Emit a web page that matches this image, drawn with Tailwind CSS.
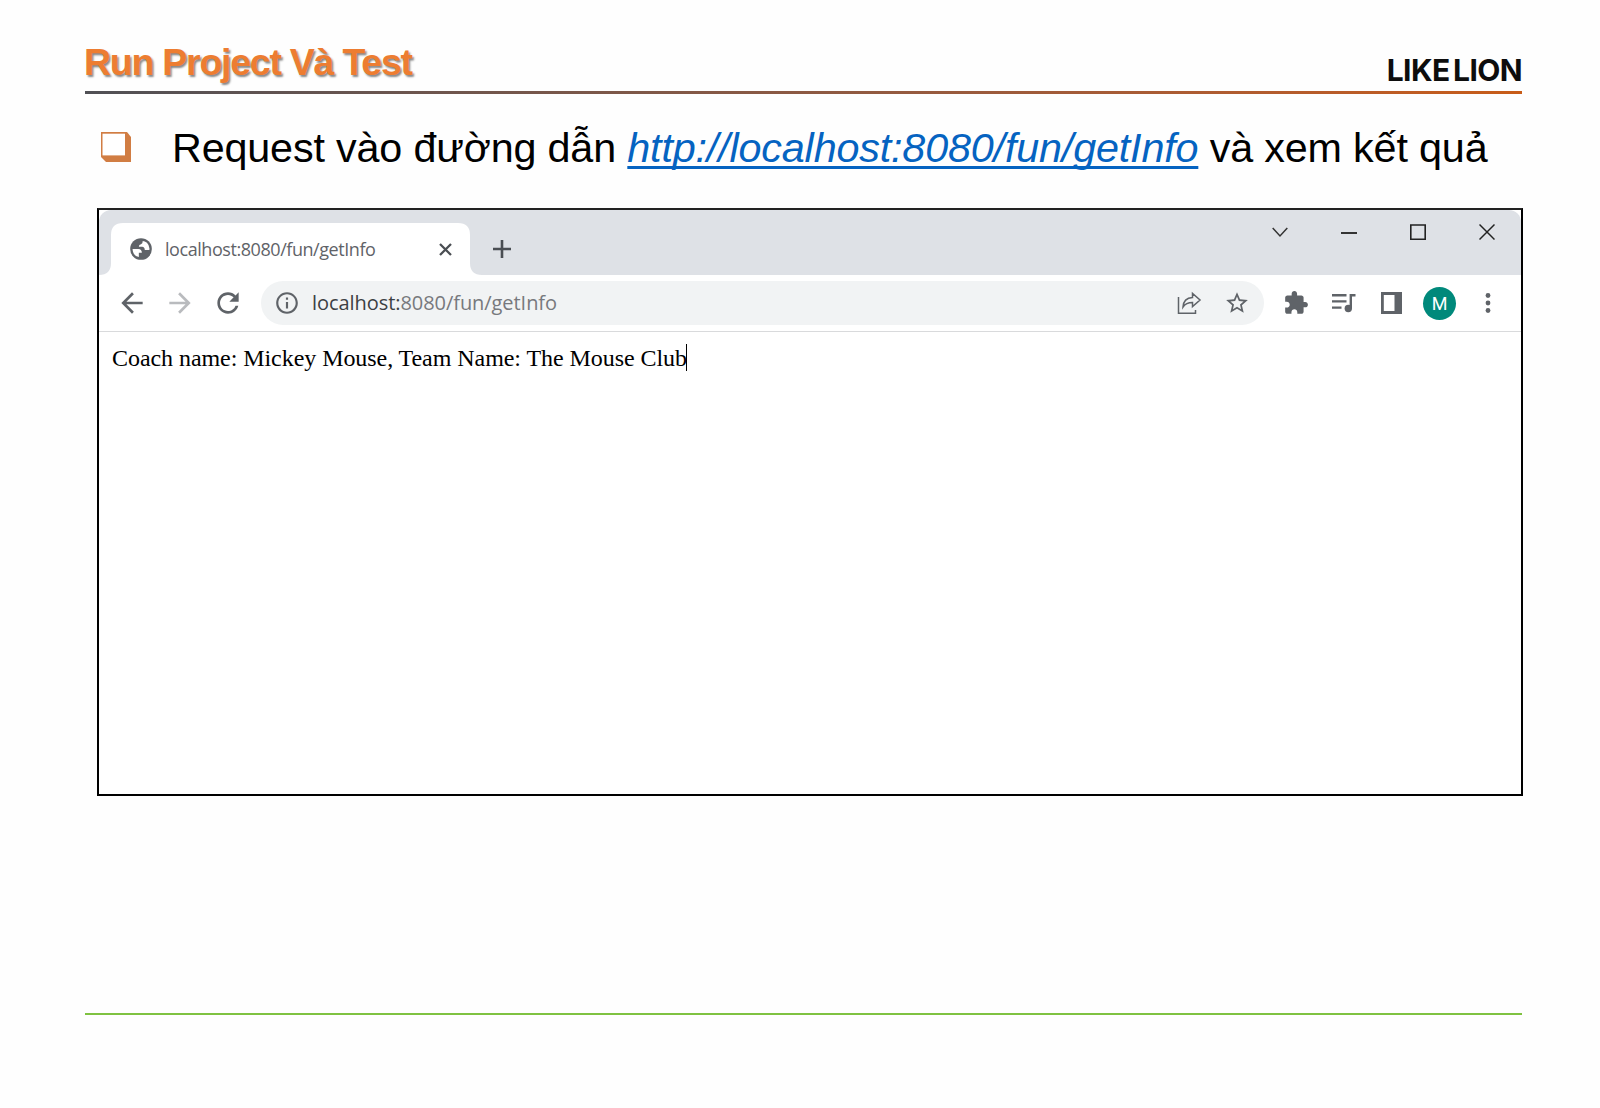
<!DOCTYPE html>
<html lang="vi"><head><meta charset="utf-8"><title>Run Project Và Test</title>
<script src="https://cdn.jsdelivr.net/npm/@tailwindcss/browser@4"></script></head>
<body class="bg-white">
<main class="flex h-[1108px] w-[1600px] flex-col overflow-hidden bg-[#fefefe] pl-[85px] pr-[78px] font-['Liberation_Sans',Arial,sans-serif]">
<header class="flex h-[91px] shrink-0 items-start justify-between whitespace-nowrap">
<h1 class="-ml-px mt-[41px] text-[37.5px] leading-[43px] font-bold tracking-[-1.25px] text-[#ed7d31] [text-shadow:1.5px_1.5px_2px_#00000077]">Run Project Và Test</h1>
<div class="mt-[54px] text-[30px] leading-[32px] font-bold tracking-[-0.6px] text-[#0d0d0d] font-['Inter',sans-serif] [word-spacing:-3px]">LIKE LION</div>
</header>
<div class="h-[3px] shrink-0 bg-linear-to-r from-[#505055] to-[#c85c17]"></div>
<section class="flex h-[114px] shrink-0 items-start pl-[16px] whitespace-nowrap text-black">
<svg class="mt-[38px] h-[30px] w-[30px]" viewBox="0 0 30 30"><path d="M0 0H26L30 5V30H5L0 25Z" fill="#d17d43"/><path d="M1.500 1.700H24V23.400H1.500Z" fill="#fff"/></svg>
<p class="mt-[31px] ml-[41px] text-[41.3px] leading-[47px] tracking-[-0.16px]">Request vào đường dẫn <a class="text-[#0563c1] italic underline decoration-[2.5px] underline-offset-[4px] [text-decoration-skip-ink:none]">http://localhost:8080/fun/getInfo</a> và xem kết quả</p>
</section>
<section class="ml-[12px] flex h-[588px] w-[1426px] shrink-0 flex-col overflow-hidden border-2 border-t-[#222] border-black bg-white">
<div class="flex h-[65px] shrink-0 items-start rounded-t-[12px] bg-[#dee1e6]">
<svg class="mt-[13px] h-[52px] w-[384px] shrink-0 -mr-[384px]" viewBox="0 0 384 52"><path d="M0 52Q12 52 12 40V12Q12 0 24 0H359Q371 0 371 12V40Q371 52 383 52Z" fill="#fff"/></svg>
<div class="relative mt-[13px] flex h-[52px] w-[371px] items-center pl-[29px] text-[#5f6368]">
<svg class="h-[26px] w-[26px] shrink-0" viewBox="0 0 24 24"><circle cx="12" cy="12" r="10" fill="#5f6368"/><path d="M4.200 12H9.500Q12.800 12.300 12.800 15.500H10V19.300Q4.500 18.500 4.200 12ZM13.500 4.500Q13.800 7 12 7.500Q10 7.800 10 10H13Q15.500 10.300 15.500 13H19.700Q20.300 9 17.500 6.200Q15.500 4.600 13.500 4.500Z" fill="#fff"/></svg>
<div class="ml-[11px] w-[274px] text-[18px] tracking-[-0.44px] whitespace-nowrap font-['Open_Sans',sans-serif]">localhost:8080/fun/getInfo</div>
<svg class="h-[13px] w-[13px] shrink-0" viewBox="0 0 13 13" stroke="#4a4e53" stroke-width="2.300"><path d="M1 1L12 12M12 1L1 12"/></svg></div>
<svg class="mt-[30px] ml-[23px] h-[18px] w-[18px]" viewBox="0 0 18 18" stroke="#4a4e53" stroke-width="2.600"><path d="M0 9H18M9 0V18"/></svg>
<div class="mt-[13px] ml-auto mr-[26px] flex items-center gap-[53px]">
<svg class="h-[18px] w-[16px]" viewBox="0 0 16 18" fill="none" stroke="#333" stroke-width="1.500"><path d="M.7 5L8 13L15.300 5"/></svg>
<svg class="h-[18px] w-[16px]" viewBox="0 0 16 18"><path d="M0 9H16V11H0Z" fill="#333"/></svg>
<svg class="h-[18px] w-[16px]" viewBox="0 0 16 18" fill="none" stroke="#222" stroke-width="1.600"><path d="M.8 2H15.200V16.200H.8Z"/></svg>
<svg class="h-[18px] w-[16px]" viewBox="0 0 16 18" fill="none" stroke="#222" stroke-width="1.500"><path d="M.5 1.500L15.500 16.500M15.500 1.500L.5 16.500"/></svg>
</div>
</div>
<div class="flex h-[57px] shrink-0 items-center border-b border-[#d9dadc] pl-[17px] text-[#5f6368]">
<svg class="h-8 w-8" viewBox="0 0 24 24" fill="currentColor"><path d="M20 11H7.830l5.590-5.590L12 4l-8 8 8 8 1.410-1.410L7.830 13H20v-2z"/></svg>
<svg class="ml-4 h-8 w-8" viewBox="0 0 24 24" fill="#b9bbbe"><path d="M12 4l-1.410 1.410L16.170 11H4v2h12.170l-5.580 5.590L12 20l8-8z"/></svg>
<svg class="ml-4 h-8 w-8" viewBox="0 0 24 24" fill="currentColor"><path d="M17.650 6.350C16.200 4.900 14.210 4 12 4c-4.420 0-7.990 3.580-7.990 8s3.570 8 7.990 8c3.730 0 6.840-2.550 7.730-6h-2.080c-.82 2.330-3.040 4-5.650 4-3.310 0-6-2.690-6-6s2.690-6 6-6c1.660 0 3.140.69 4.220 1.780L13 11h7V4l-2.350 2.350z"/></svg>
<div class="ml-[17px] flex h-[44px] w-[1003px] items-center rounded-full bg-[#f1f3f4] pl-[13px]">
<svg class="h-[26px] w-[26px]" viewBox="0 0 24 24" fill="currentColor"><path d="M11 7h2v2h-2zm0 4h2v6h-2zm1-9C6.480 2 2 6.480 2 12s4.480 10 10 10 10-4.480 10-10S17.520 2 12 2zm0 18c-4.410 0-8-3.590-8-8s3.590-8 8-8 8 3.590 8 8-3.590 8-8 8z"/></svg>
<div class="ml-[12px] text-[20px] tracking-[-0.06px] whitespace-nowrap text-[#77797d] font-['Open_Sans',sans-serif]"><span class="text-[#3c4043]">localhost:</span>8080/fun/getInfo</div>
<svg class="ml-auto h-[24px] w-[25px]" viewBox="0 0 25 24" fill="none" stroke="currentColor" stroke-width="1.500"><path d="M1.500 6V22.200H18.500V19M6 16Q6.500 7 15.500 6.500V2.500L23 9L15.500 15.500V11.500Q9 11.500 6 16Z"/></svg>
<svg class="mr-[14px] ml-[22px] h-[26px] w-[26px]" viewBox="0 0 24 24" fill="currentColor"><path d="M22 9.240l-7.190-.62L12 2 9.190 8.630 2 9.240l5.460 4.730L5.820 21 12 17.270 18.180 21l-1.630-7.030L22 9.240zM12 15.400l-3.760 2.270 1-4.280-3.320-2.880 4.380-.38L12 6.100l1.710 4.040 4.380.38-3.320 2.880 1 4.280L12 15.400z"/></svg>
</div>
<svg class="ml-[19px] h-[26px] w-[26px]" viewBox="0 0 24 24" fill="currentColor"><path d="M20.500 11H19V7c0-1.100-.9-2-2-2h-4V3.500C13 2.120 11.880 1 10.500 1S8 2.120 8 3.500V5H4c-1.100 0-1.990.9-1.990 2v3.800H3.500c1.490 0 2.700 1.210 2.700 2.700s-1.210 2.700-2.700 2.700H2V20c0 1.100.9 2 2 2h3.800v-1.500c0-1.490 1.210-2.700 2.700-2.700 1.490 0 2.700 1.210 2.700 2.700V22H17c1.100 0 2-.9 2-2v-4h1.500c1.380 0 2.500-1.120 2.500-2.500S21.880 11 20.500 11z"/></svg>
<svg class="ml-[22px] h-[20px] w-[25px]" viewBox="0 0 25 20" fill="none" stroke="currentColor" stroke-width="2.400"><path d="M1 2.200H15.500M1 8.400H15.500M1 14.600H10.500M24.500 2.200H19.800V15"/><circle cx="17.300" cy="15.500" r="3.700" fill="currentColor" stroke="none"/></svg>
<svg class="ml-[25px] h-[22px] w-[21px]" viewBox="0 0 21 22"><path fill="currentColor" d="M0 0H21V22H0Z"/><path fill="#fff" d="M2.800 3H13.500V19H2.800Z"/></svg>
<div class="ml-[21px] flex h-[33px] w-[33px] items-center justify-center rounded-full bg-[#00897b] text-[18px] text-white font-['Roboto',sans-serif]">M</div>
<svg class="ml-[29px] h-[22px] w-[6px]" viewBox="0 0 6 22" fill="currentColor"><circle cx="3" cy="3.500" r="2.400"/><circle cx="3" cy="11" r="2.400"/><circle cx="3" cy="18.500" r="2.400"/></svg>
</div>
<div class="flex items-start pt-[12px] pl-[13px] whitespace-nowrap"><span class="text-[24px] leading-[28px] tracking-[-0.06px] text-black font-['Liberation_Serif',serif]">Coach name: Mickey Mouse, Team Name: The Mouse Club</span><span class="-ml-px h-[27px] w-[1.500px] bg-black"></span></div>
</section>
<div class="mt-[217px] h-[2px] shrink-0 bg-[#7fc241]"></div>
</main>
</body></html>
